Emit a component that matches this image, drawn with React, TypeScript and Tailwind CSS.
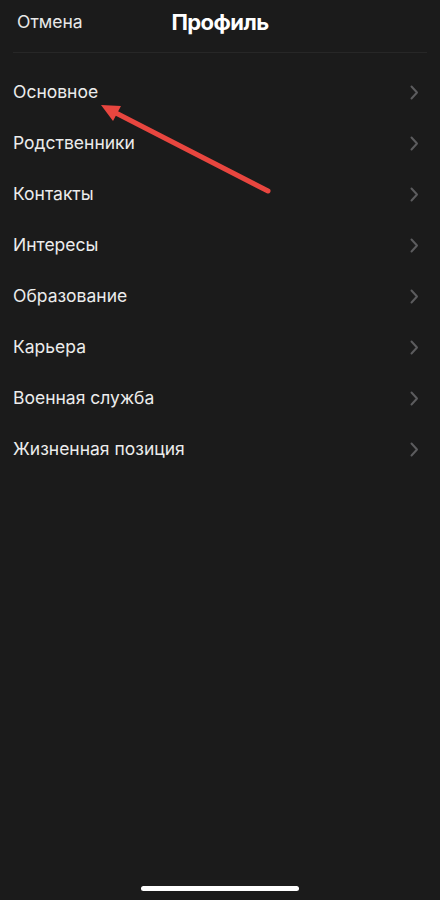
import React from 'react';

const ITEMS = [
  'Основное',
  'Родственники',
  'Контакты',
  'Интересы',
  'Образование',
  'Карьера',
  'Военная служба',
  'Жизненная позиция',
];

function Chevron() {
  return (
    <svg width="9" height="15" viewBox="0 0 9 15" fill="none">
      <path d="M1.5 1.5 L7 7.5 L1.5 13.5" stroke="#5c5c5e" strokeWidth="2" strokeLinecap="round" strokeLinejoin="round" />
    </svg>
  );
}

export default function App() {
  return (
    <div
      className="relative w-[440px] h-[900px] bg-[#1b1b1b] text-white overflow-hidden"
      style={{ fontFamily: 'Inter, "Noto Sans", sans-serif' }}
    >
      {/* header */}
      <div className="mx-[13px] h-[53px] flex items-center border-b border-[#272727] relative">
        <button className="pl-1 text-[17.5px] text-[#e8e8e8] -mt-[8px]">Отмена</button>
        <h1 className="absolute left-0 right-0 text-center -mt-[8px] text-[22px] font-bold tracking-tight pointer-events-none">
          Профиль
        </h1>
      </div>

      {/* list */}
      <div className="pt-[14px]">
        {ITEMS.map((item) => (
          <div key={item} className="h-[51px] flex items-center justify-between pl-[13px] pr-[21px]">
            <span className="text-[17.5px] text-[#ececec]">{item}</span>
            <Chevron />
          </div>
        ))}
      </div>

      {/* annotation arrow */}
      <svg className="absolute inset-0 pointer-events-none" width="440" height="900">
        <line x1="268" y1="191" x2="114" y2="112" stroke="#e8463f" strokeWidth="5" strokeLinecap="round" />
        <polygon points="101,105 113,121 121,106" fill="#e8463f" />
      </svg>

      {/* home indicator */}
      <div className="absolute bottom-[9px] left-[141px] w-[158px] h-[5px] rounded-full bg-white" />
    </div>
  );
}
